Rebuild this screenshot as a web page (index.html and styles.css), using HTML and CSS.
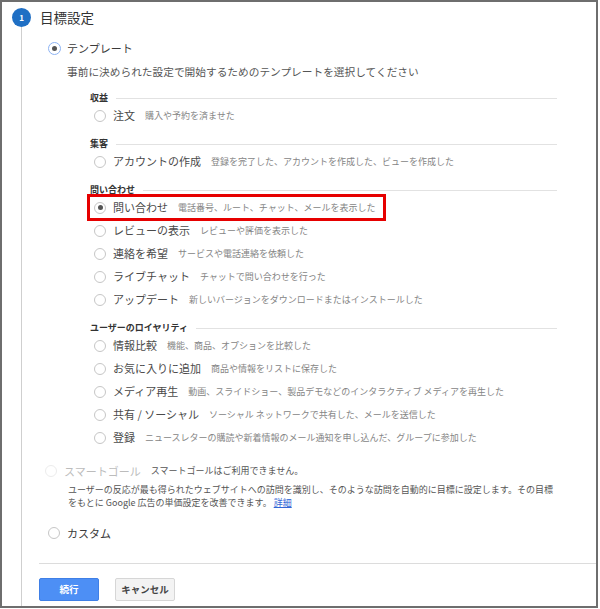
FILE: index.html
```html
<!DOCTYPE html>
<html lang="ja">
<head>
<meta charset="utf-8">
<title>目標設定</title>
<link rel="stylesheet" href="styles.css">
</head>
<body>
<div class="frame">
  <div class="step-head">
    <span class="step-num">1</span>
  </div>
  <div class="step-title">目標設定</div>
  <div class="step-rail"><div class="rail-line"></div></div>
  <div class="step-body">
    <div class="main-opt">
      <span class="radio focus checked"></span>
      <span class="main-label">テンプレート</span>
    </div>
    <div class="template-desc">事前に決められた設定で開始するためのテンプレートを選択してください</div>

    <div class="groups">
      <div class="group">
        <div class="group-head">収益</div>
        <div class="opt"><span class="radio"></span><span class="label">注文</span><span class="desc">購入や予約を済ませた</span></div>
      </div>
      <div class="group">
        <div class="group-head">集客</div>
        <div class="opt"><span class="radio"></span><span class="label">アカウントの作成</span><span class="desc">登録を完了した、アカウントを作成した、ビューを作成した</span></div>
      </div>
      <div class="group">
        <div class="group-head">問い合わせ</div>
        <div class="opt marked"><span class="radio checked"></span><span class="label">問い合わせ</span><span class="desc">電話番号、ルート、チャット、メールを表示した</span></div>
        <div class="opt"><span class="radio"></span><span class="label">レビューの表示</span><span class="desc">レビューや評価を表示した</span></div>
        <div class="opt"><span class="radio"></span><span class="label">連絡を希望</span><span class="desc">サービスや電話連絡を依頼した</span></div>
        <div class="opt"><span class="radio"></span><span class="label">ライブチャット</span><span class="desc">チャットで問い合わせを行った</span></div>
        <div class="opt"><span class="radio"></span><span class="label">アップデート</span><span class="desc">新しいバージョンをダウンロードまたはインストールした</span></div>
      </div>
      <div class="group">
        <div class="group-head">ユーザーのロイヤリティ</div>
        <div class="opt"><span class="radio"></span><span class="label">情報比較</span><span class="desc">機能、商品、オプションを比較した</span></div>
        <div class="opt"><span class="radio"></span><span class="label">お気に入りに追加</span><span class="desc">商品や情報をリストに保存した</span></div>
        <div class="opt"><span class="radio"></span><span class="label">メディア再生</span><span class="desc">動画、スライドショー、製品デモなどのインタラクティブ メディアを再生した</span></div>
        <div class="opt"><span class="radio"></span><span class="label">共有 / ソーシャル</span><span class="desc">ソーシャル ネットワークで共有した、メールを送信した</span></div>
        <div class="opt"><span class="radio"></span><span class="label">登録</span><span class="desc">ニュースレターの購読や新着情報のメール通知を申し込んだ、グループに参加した</span></div>
      </div>
    </div>

    <div class="main-opt smart">
      <span class="radio disabled"></span>
      <span class="main-label muted">スマートゴール</span>
      <span class="smart-note">スマートゴールはご利用できません。</span>
    </div>
    <div class="smart-desc">ユーザーの反応が最も得られたウェブサイトへの訪問を識別し、そのような訪問を自動的に目標に設定します。その目標<br>をもとに Google 広告の単価設定を改善できます。 <a class="link" href="#">詳細</a></div>

    <div class="main-opt custom">
      <span class="radio"></span>
      <span class="main-label">カスタム</span>
    </div>

    <div class="separator"></div>

    <div class="actions">
      <button class="btn primary" type="button">続行</button>
      <button class="btn" type="button">キャンセル</button>
    </div>
  </div>
</div>
</body>
</html>
```

FILE: styles.css
```css
html, body {
  margin: 0;
  padding: 0;
  background: #ffffff;
}

body {
  font-family: "Noto Sans CJK JP", "Noto Sans", "Liberation Sans", sans-serif;
  color: #333;
}

.frame {
  width: 598px;
  height: 608px;
  box-sizing: border-box;
  border: 2px solid #6e6e6e;
  display: grid;
  grid-template-columns: 38px 1fr;
  grid-template-rows: auto 1fr;
  overflow: hidden;
}

.step-head {
  padding: 6px 0 0 10px;
}

.step-num {
  display: flex;
  width: 19px;
  height: 19px;
  border-radius: 50%;
  background: #1f6fc4;
  color: #fff;
  font-size: 8px;
  font-weight: bold;
  align-items: center;
  justify-content: center;
  line-height: 1;
}

.step-title {
  padding-top: 6px;
  font-size: 13.5px;
  line-height: 19px;
  color: #333;
}

.step-rail {
  display: flex;
}

.rail-line {
  margin-left: 19px;
  width: 1px;
  background: #cfcfcf;
}

.step-body {
  display: flex;
  flex-direction: column;
}

/* radios */
.radio {
  flex: none;
  width: 12px;
  height: 12px;
  box-sizing: border-box;
  border: 1px solid #c6c6c6;
  border-radius: 50%;
  background: #fff;
  display: flex;
  align-items: center;
  justify-content: center;
}

.radio.checked::after {
  content: "";
  width: 5px;
  height: 5px;
  border-radius: 50%;
  background: #555;
}

.radio.focus {
  width: 13px;
  height: 13px;
  border: 1.5px solid #8db3f3;
}

.radio.disabled {
  border-color: #ececec;
}

/* main options */
.main-opt {
  display: flex;
  align-items: center;
  height: 24px;
  margin-top: 9px;
  padding-left: 8px;
}

.main-opt .radio {
  margin-right: 7px;
}

.main-opt .radio.focus {
  margin-left: -0.5px;
  margin-right: 6.5px;
}

.main-label {
  font-size: 11px;
  line-height: 24px;
  color: #3a3a3a;
}

.main-label.muted {
  color: #bcbcbc;
}

.template-desc {
  margin: 4px 0 0 27px;
  font-size: 10.7px;
  line-height: 16px;
  color: #555;
}

/* groups */
.groups {
  margin: 11px 0 0 50px;
  width: 467px;
}

.group + .group {
  margin-top: 10px;
}

.group-head {
  display: flex;
  align-items: center;
  height: 13px;
  font-size: 9px;
  font-weight: bold;
  color: #333;
  line-height: 13px;
}

.group-head::after {
  content: "";
  flex: 1;
  height: 1px;
  margin: 2px 0 0 8px;
  background: #e2e2e2;
}

.opt {
  display: flex;
  align-items: center;
  height: 23px;
  padding-left: 4px;
  white-space: nowrap;
}

.opt .radio {
  margin-right: 7px;
}

.label {
  font-size: 11px;
  color: #4a4a4a;
  line-height: 23px;
}

.desc {
  margin-left: 10px;
  font-size: 9px;
  color: #858585;
  line-height: 23px;
}

/* red annotation box */
.opt.marked {
  position: relative;
  width: max-content;
}

.opt.marked::after {
  content: "";
  position: absolute;
  left: -3px;
  right: -10px;
  top: -2px;
  bottom: -2px;
  border: 3px solid #e60000;
}

/* smart goal */
.main-opt.smart {
  margin-top: 10px;
  padding-left: 5px;
}

.smart-note {
  margin-left: 10px;
  font-size: 9px;
  color: #555;
  line-height: 24px;
}

.smart-desc {
  margin: 0 0 0 28px;
  font-size: 9px;
  line-height: 13px;
  color: #555;
  white-space: nowrap;
}

.link {
  color: #3367d6;
  text-decoration: underline;
}

.main-opt.custom {
  margin-top: 12px;
}

.separator {
  margin: 18px 0 0 -1px;
  height: 1px;
  background: #dcdcdc;
}

.actions {
  display: flex;
  gap: 16px;
  margin: 14px 0 0 -1px;
}

.btn {
  width: 60px;
  height: 23px;
  box-sizing: border-box;
  border: 1px solid #d6d6d6;
  border-radius: 2px;
  background: #f3f3f3;
  color: #444;
  font-family: inherit;
  font-size: 9.5px;
  font-weight: bold;
  padding: 0;
  line-height: 21px;
}

.btn.primary {
  background: #4d8ff5;
  border-color: #3f7fe6;
  color: #fff;
}
```
